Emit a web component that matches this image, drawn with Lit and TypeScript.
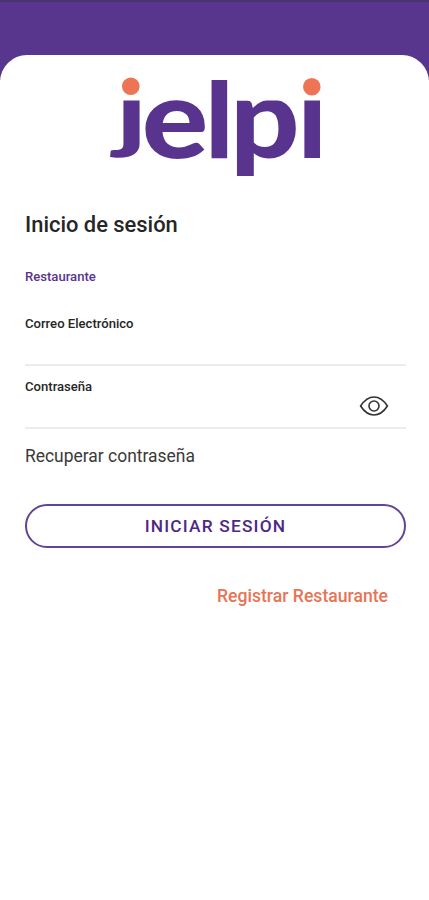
import { LitElement, html, css } from "lit";
import { customElement } from "lit/decorators.js";

@customElement("jelpi-logo")
class JelpiLogo extends LitElement {
  static styles = css`
    :host { display: flow-root; width: 220px; height: 104px; }
    svg { display: block; margin: -40px 0 0 -20px; }
    text { font-family: Lato, sans-serif; font-weight: 900; font-size: 113px; fill: #58348e; }
    .hook { font-weight: 700; }
    .dot { fill: #ee7456; }
  `;
  render() {
    return html`<svg width="260" height="180" viewBox="85 35 260 180" role="img" aria-label="jelpi">
      <defs>
        <clipPath id="below"><rect x="90" y="100.5" width="250" height="75.5" rx="2" /></clipPath>
      </defs>
      <g clip-path="url(#below)">
        <text class="hook" transform="translate(115 141.5) scale(1.15 .74)">j</text>
        <text transform="translate(297.5 158)">i</text>
      </g>
      <text transform="translate(141.7 158) scale(1.1 .98)">e</text>
      <text transform="translate(205 158) scale(1 .93)">l</text>
      <g clip-path="url(#below)"><text transform="translate(230 158) scale(1.08 .98)">p</text></g>
      <circle class="dot" cx="130.8" cy="86.2" r="8.8" />
      <circle class="dot" cx="311.8" cy="86.8" r="8.8" />
    </svg>`;
  }
}

@customElement("app-root")
class AppRoot extends LitElement {
  static styles = css`
    :host { display: block; height: 900px; background: #fff; font-family: Roboto, sans-serif; color: #262626; }
    * { box-sizing: border-box; }
    .top { height: 80px; background: #59368d; border-top: 2px solid #49346f; padding-top: 53px; }
    .sheet { height: 845px; background: #fff; border-radius: 27px 27px 0 0; padding: 20px 23px 0 25px; }
    .logo { margin-left: 80px; }
    h1 { margin: 31px 0 0; font-size: 21.9px; line-height: 30px; font-weight: 500; }
    .kind { margin-top: 29px; font-size: 13.1px; line-height: 16px; font-weight: 500; color: #58348e; }
    .field { display: flex; justify-content: space-between; border-bottom: 2px solid #ececec; font-size: 13.1px; line-height: 16px; font-weight: 500; }
    .mail { height: 50px; margin-top: 31px; }
    .pass { height: 63px; padding-top: 13px; }
    .eye { margin: 16px 17px 0 0; }
    .recover { margin-top: 15px; font-size: 17.45px; line-height: 24px; color: #3a3a3a; }
    button { display: block; width: 381px; height: 44px; margin-top: 36px; padding: 0; border: 2px solid #62429a; border-radius: 22px; background: #fff; color: #4d2888; font: 500 17.3px/22px Roboto, sans-serif; letter-spacing: 1.2px; }
    .register { margin: 36px 18px 0 0; text-align: right; font-size: 17.6px; line-height: 24px; font-weight: 500; color: #e77455; }
  `;
  render() {
    return html`<div class="top">
      <main class="sheet">
        <jelpi-logo class="logo"></jelpi-logo>
        <h1><span>Inicio de sesión</span></h1>
        <div class="kind"><span>Restaurante</span></div>
        <div class="field mail"><span>Correo Electrónico</span></div>
        <div class="field pass">
          <span>Contraseña</span>
          <svg class="eye" width="30" height="22" viewBox="0 0 30 22" fill="none" stroke="#333" stroke-width="1.6">
            <path d="M1.6 11C5.500 5 10 2 15 2s9.500 3 13.400 9C24.500 17 20 20 15 20S5.500 17 1.600 11Z" />
            <circle cx="15" cy="11" r="5" />
          </svg>
        </div>
        <div class="recover"><span>Recuperar contraseña</span></div>
        <button>INICIAR SESIÓN</button>
        <div class="register"><span>Registrar Restaurante</span></div>
      </main>
    </div>`;
  }
}
